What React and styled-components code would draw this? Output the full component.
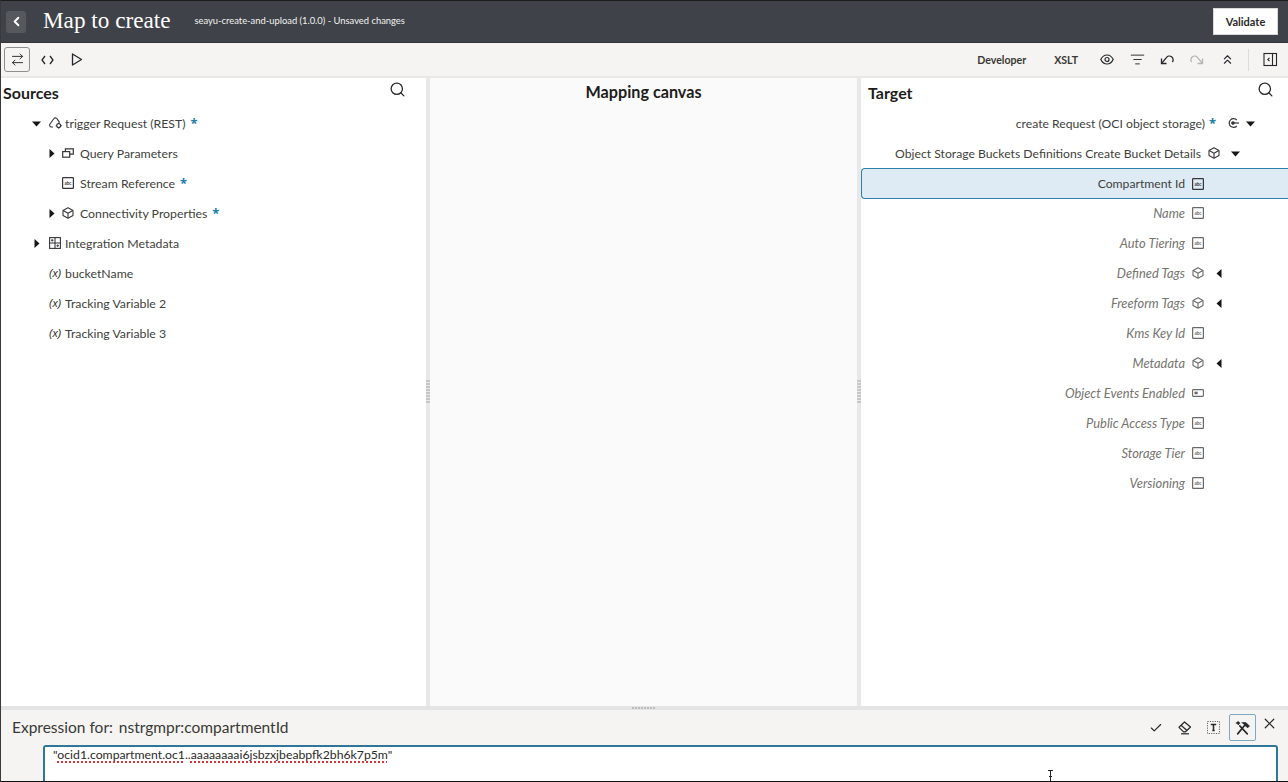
import React from "react";
import styled, { createGlobalStyle } from "styled-components";
import { ArrowRightLeft, ChevronLeft, ChevronsUp, Search, X, Check, ListFilter } from "lucide-react";

const GlobalStyle = createGlobalStyle`
  html, body { margin: 0; padding: 0; height: 100%; overflow: hidden; }
  body { font-family: Lato, "Noto Sans", "Liberation Sans", sans-serif; color: #2b2a28; background: #fff; }
`;

const Page = styled.div`
  position: relative;
  width: 1288px;
  height: 782px;
  box-sizing: border-box;
  border-top: 1px solid #1c1c1c;
  border-left: 1px solid #3a3a3a;
  border-bottom: 1px solid #111;
  display: flex;
  flex-direction: column;
  overflow: hidden;
`;

const Header = styled.header`
  height: 41px;
  flex: none;
  background: #3f4248;
  border-bottom: 1px solid #33353a;
  display: flex;
  align-items: center;
  padding: 0 10px 0 5px;
  color: #fff;
`;
const BackButton = styled.div`
  width: 20px;
  height: 22px;
  border-radius: 3px;
  background: #55585d;
  display: flex;
  align-items: center;
  justify-content: center;
  margin-right: 17px;
`;
const Title = styled.h1`
  font-family: "Liberation Serif", serif;
  font-weight: 400;
  font-size: 23.2px;
  margin: 0 24px 2px 0;
  white-space: nowrap;
`;
const Subtitle = styled.span`
  font-size: 9.4px;
  color: #f2f2f2;
  white-space: nowrap;
  margin-bottom: 2px;
`;
const ValidateButton = styled.button`
  margin-left: auto;
  width: 65px;
  height: 27px;
  border: 1px solid #d8d8d8;
  background: #fff;
  color: #2b2a28;
  font: 700 11px Lato, sans-serif;
  padding: 0;
`;

const Toolbar = styled.div`
  height: 33px;
  flex: none;
  background: #f5f4f2;
  border-bottom: 2px solid #e9e8e6;
  display: flex;
  align-items: center;
  padding: 0 3px;
`;
const ToolButton = styled.div`
  width: ${({ $w }) => $w || 30}px;
  height: ${({ $active }) => ($active ? 25 : 26)}px;
  flex: none;
  display: flex;
  align-items: center;
  justify-content: center;
  box-sizing: border-box;
  color: ${({ $off }) => ($off ? "#b4b4b2" : "#26272a")};
  ${({ $active }) => $active && "border: 1px solid #8e8e8e; border-radius: 3px; width: 26px; margin-right: 2px;"}
`;
const ToolText = styled.span`
  font-size: 10.6px;
  font-weight: 700;
  color: #3a3936;
  margin-right: ${({ $mr }) => $mr}px;
`;
const Spacer = styled.div`
  flex: 1;
`;
const ToolDivider = styled.div`
  width: 1px;
  height: 22px;
  background: #dedddb;
  margin: 0 6px;
`;

const Panels = styled.div`
  flex: 1;
  min-height: 0;
  display: grid;
  grid-template-columns: 425px 4px 427px 4px 1fr;
`;
const Gutter = styled.div`
  position: relative;
  background: #e8e8e8;
`;
const GutterGrip = styled.div`
  position: absolute;
  left: 0;
  right: 0;
  top: 302px;
  height: 24px;
  background: repeating-linear-gradient(to bottom, #c6c6c6 0 2px, transparent 2px 3px);
`;
const SidePanel = styled.section`
  position: relative;
  background: #fff;
  min-width: 0;
`;
const CanvasPanel = styled.section`
  background: #fafafa;
  min-width: 0;
`;
const PanelTitle = styled.h2`
  margin: 0;
  font-size: ${({ $center }) => ($center ? 16.2 : 16)}px;
  font-weight: 700;
  color: #1e1d1b;
  height: 30px;
  line-height: ${({ $center }) => ($center ? 28 : 30)}px;
  padding-left: ${({ $pl }) => $pl || 2}px;
  padding-right: ${({ $center }) => ($center ? 2 : 0)}px;
  text-align: ${({ $center }) => ($center ? "center" : "left")};
`;
const PanelSearch = styled.div`
  position: absolute;
  right: ${({ $right }) => $right}px;
  top: 3px;
  color: #26272a;
  display: flex;
`;

const SourceRow = styled.div`
  height: 30px;
  display: flex;
  align-items: center;
  padding-left: ${({ $indent }) => $indent}px;
  font-size: 12.3px;
  color: #403f3c;
  white-space: nowrap;
`;
const CaretSlot = styled.span`
  width: 17px;
  flex: none;
  display: flex;
  align-items: center;
`;
const IconSlot = styled.span`
  width: 16px;
  flex: none;
  display: flex;
  align-items: center;
  color: #35353a;
  ${({ $nested }) => $nested && "margin: 0 2px 0 -2px;"}
`;
const Star = styled.span`
  font-family: "Noto Sans", sans-serif;
  color: #1a7fa8;
  font-weight: 700;
  font-size: 13px;
  margin-left: ${({ $ml }) => $ml || 5}px;
`;
const VarMark = styled.span`
  font-family: "Liberation Sans", sans-serif;
  font-style: italic;
  font-size: 10.5px;
  color: #2b2a28;
  width: 16px;
  flex: none;
`;

const TargetRow = styled.div`
  height: 30px;
  box-sizing: border-box;
  display: flex;
  align-items: center;
  justify-content: flex-end;
  padding-right: ${({ $pr }) => $pr}px;
  font-size: ${({ $optional }) => ($optional ? 12.9 : 12.2)}px;
  white-space: nowrap;
  font-style: ${({ $optional }) => ($optional ? "italic" : "normal")};
  color: ${({ $optional }) => ($optional ? "#75746f" : "#403f3c")};
  ${({ $selected }) =>
    $selected &&
    "height: 31px; margin-bottom: -1px; background: #deebf4; border: 1px solid #2f80a8; border-right: 0; border-radius: 4px 0 0 4px;"}
`;
const TargetIcon = styled.span`
  margin-left: ${({ $ml }) => $ml || 7}px;
  display: flex;
  flex: none;
  color: ${({ $dim }) => ($dim ? "#6a6a6a" : "#35353a")};
`;

const Splitter = styled.div`
  position: relative;
  height: 4px;
  flex: none;
  background: #e4e4e4;
`;
const SplitterGrip = styled.div`
  position: absolute;
  left: 631px;
  top: 1px;
  width: 24px;
  height: 2px;
  background: repeating-linear-gradient(to right, #bcbcbc 0 2px, transparent 2px 3px);
`;
const ExpressionPanel = styled.div`
  height: 71px;
  flex: none;
  background: #f5f4f2;
  display: flex;
  flex-direction: column;
`;
const ExpressionHead = styled.div`
  height: 35px;
  flex: none;
  display: flex;
  align-items: center;
  padding: 0 5px 0 11px;
`;
const ExpressionLabel = styled.span`
  font-size: 15.5px;
  color: #3a3936;
  white-space: pre;
  margin-bottom: 2px;
`;
const ExpressionTarget = styled.span`
  margin-left: -2px;
`;
const ExpressionTools = styled.div`
  margin-left: auto;
  display: flex;
  align-items: center;
  color: #26272a;
`;
const ExprButton = styled.div`
  width: ${({ $w }) => $w || 29}px;
  height: 27px;
  box-sizing: border-box;
  display: flex;
  align-items: center;
  justify-content: center;
  ${({ $active }) => $active && "width: 27px; margin-left: 1px; border: 1px solid #7fa9c2; border-radius: 2px;"}
`;
const CloseMark = styled.span`
  display: flex;
  margin-bottom: 8px;
`;
const Editor = styled.div`
  flex: 1;
  margin: 0 10px 0 42px;
  background: #fff;
  border: 2px solid #2f7698;
  border-bottom: 0;
  border-radius: 3px 3px 0 0;
  padding: 0 8px;
  font-size: 12.25px;
  line-height: 16px;
  color: #2b2a28;
`;
const Misspelled = styled.span`
  text-decoration: underline dotted #d9333f 1.5px;
  text-underline-offset: 2px;
`;
const TextCursor = styled.svg`
  position: absolute;
  left: 1045px;
  top: 769px;
`;

const Caret = ({ dir }) => {
  const points = {
    down: "0,2.5 9,2.5 4.5,7.5",
    right: "2.5,0 7.5,4.5 2.5,9",
    left: "6.5,0 1.5,4.5 6.5,9",
  }[dir];
  return (
    <svg width="9" height="9" viewBox="0 0 9 9">
      <polygon points={points} fill="#161616" />
    </svg>
  );
};

const TextTypeIcon = () => (
  <svg width="12" height="12" viewBox="0 0 12 12" fill="none">
    <rect x=".6" y=".6" width="10.8" height="10.8" rx=".6" stroke="currentColor" strokeWidth="1.2" />
    <text x="6" y="7.6" textAnchor="middle" fontSize="4.6" fontWeight="700" fontStyle="normal" fontFamily="Lato, sans-serif" fill="currentColor">abc</text>
  </svg>
);
const BoolTypeIcon = () => (
  <svg width="12" height="12" viewBox="0 0 12 12" fill="none">
    <rect x=".6" y="2.6" width="10.8" height="6.8" rx=".6" stroke="currentColor" strokeWidth="1.1" />
    <rect x="2.5" y="4.7" width="3.2" height="2.5" fill="currentColor" />
  </svg>
);
const CubeIcon = () => (
  <svg width="12" height="12" viewBox="0 0 12 12" fill="none" stroke="currentColor" strokeWidth="1.1" strokeLinejoin="round">
    <path d="M6 .8 11 3.4v5.2L6 11.2 1 8.6V3.4Z" />
    <path d="M1.2 3.6 6 6.2l4.8-2.6M6 6.2v4.8" />
  </svg>
);
const RestIcon = () => (
  <svg width="14" height="13" viewBox="0 0 14 13" fill="none" stroke="currentColor" strokeWidth="1.1">
    <path d="M3.5 10H2.4A1.9 1.9 0 0 1 1 7l3.8-5.2a2 2 0 0 1 3.6.6l2 2.7" strokeLinecap="round" />
    <circle cx="9.7" cy="8.6" r="2" />
    <path d="M9.7 5.6v1M9.7 10.6v1M6.8 8.6h1M11.7 8.6h1" />
  </svg>
);
const ParamsIcon = () => (
  <svg width="12" height="12" viewBox="0 0 12 12" fill="none" stroke="currentColor" strokeWidth="1.2">
    <rect x=".7" y="4.6" width="7" height="5.6" />
    <path d="M3.4 4.4V1.8h7.9v5.4H7.9" />
  </svg>
);
const MetaIcon = () => (
  <svg width="12" height="12" viewBox="0 0 12 12" fill="none" stroke="currentColor" strokeWidth="1.1">
    <rect x=".6" y=".6" width="10.8" height="10.8" />
    <path d="M6 .6v10.8M.6 6h10.8" />
    <path d="M2 3.3h2.5M3.2 2v2.6M7.4 8.7h2.6M8.7 7.4V10" strokeWidth=".9" />
  </svg>
);
const RequestIcon = () => (
  <svg width="12" height="12" viewBox="0 0 12 12" fill="none" stroke="currentColor" strokeWidth="1.2">
    <path d="M9.8 3A4.4 4.4 0 1 0 9.8 9" />
    <circle cx="6" cy="6" r="1.2" fill="currentColor" />
    <path d="M7 6h5" />
  </svg>
);
const CodeIcon = () => (
  <svg width="13" height="10" viewBox="0 0 13 10" fill="none" stroke="currentColor" strokeWidth="1.3">
    <path d="M4 1 1 5l3 4M9 1l3 4-3 4" />
  </svg>
);
const PlayIcon = () => (
  <svg width="12" height="13" viewBox="0 0 12 13" fill="none" stroke="currentColor" strokeWidth="1.3" strokeLinejoin="round">
    <path d="M1.5 1 10.5 6.5 1.5 12Z" />
  </svg>
);
const EyeIcon = () => (
  <svg width="14" height="11" viewBox="0 0 14 11" fill="none" stroke="currentColor" strokeWidth="1.2">
    <path d="M.8 5.5C2.2 2.6 4.4 1 7 1s4.8 1.6 6.2 4.5C11.8 8.4 9.6 10 7 10S2.2 8.4.8 5.5Z" />
    <circle cx="7" cy="5.5" r="2" />
  </svg>
);
const UndoIcon = ({ flip }) => (
  <svg width="14" height="11" viewBox="0 0 14 11" fill="none" stroke="currentColor" strokeWidth="1.3" style={flip ? { transform: "scaleX(-1)" } : undefined}>
    <path d="M1.5 4.5v5h5" />
    <path d="M1.8 9.2 6.4 3.6A3.4 3.4 0 0 1 12.4 8" />
  </svg>
);
const CollapseIcon = () => (
  <svg width="15" height="15" viewBox="0 0 15 15" fill="none" stroke="currentColor" strokeWidth="1.1">
    <rect x="1" y="1.5" width="12.5" height="12" />
    <path d="M9.5 1.5v12" />
    <path d="M6.5 5.8 4.8 7.5l1.7 1.7" />
  </svg>
);
const EraserIcon = () => (
  <svg width="14" height="14" viewBox="0 0 14 14" fill="none" stroke="currentColor" strokeWidth="1.2" strokeLinejoin="round">
    <path d="M1 6.3 6.5 1 12.5 6 7.5 10.8 5.5 10.8Z" />
    <path d="M3 4.3 9 9.5" />
    <path d="M3 12.8h8" />
  </svg>
);
const TextBoxIcon = () => (
  <svg width="13" height="13" viewBox="0 0 13 13" fill="none">
    <rect x=".5" y=".5" width="12" height="12" stroke="currentColor" strokeDasharray="1.2 1.2" opacity=".7" />
    <path d="M3.8 3.5h5.4M6.5 3.5v6M5.3 9.5h2.4" stroke="currentColor" strokeWidth="1.5" />
  </svg>
);
const ToolsIcon = () => (
  <svg width="16" height="16" viewBox="0 0 15 15" fill="none" stroke="currentColor" strokeLinecap="round">
    <path d="M9.5 4.5 2.5 13" strokeWidth="1.5" />
    <path d="M6.5 2.5h3.8l3.2 3.2-1.5 1.5-3-2.2" fill="currentColor" strokeWidth=".8" />
    <path d="M4.5 5.5 11.5 13" strokeWidth="1.5" />
    <path d="M1.5 2.8 3 4.4l1.5-1.3L3.2 1.5a2.4 2.4 0 0 0-1.7 1.3Z" fill="currentColor" strokeWidth=".8" />
  </svg>
);

const sources = [
  { indent: 31, caret: "down", icon: <RestIcon />, label: "trigger Request (REST)", required: true },
  { indent: 46, caret: "right", icon: <ParamsIcon />, label: "Query Parameters", nested: true },
  { indent: 46, icon: <TextTypeIcon />, label: "Stream Reference", required: true, nested: true },
  { indent: 46, caret: "right", icon: <CubeIcon />, label: "Connectivity Properties", required: true, nested: true },
  { indent: 31, caret: "right", icon: <MetaIcon />, label: "Integration Metadata" },
  { indent: 31, variable: true, label: "bucketName" },
  { indent: 31, variable: true, label: "Tracking Variable 2" },
  { indent: 31, variable: true, label: "Tracking Variable 3" },
];

const targets = [
  { label: "Name", Icon: TextTypeIcon },
  { label: "Auto Tiering", Icon: TextTypeIcon },
  { label: "Defined Tags", Icon: CubeIcon, caret: true },
  { label: "Freeform Tags", Icon: CubeIcon, caret: true },
  { label: "Kms Key Id", Icon: TextTypeIcon },
  { label: "Metadata", Icon: CubeIcon, caret: true },
  { label: "Object Events Enabled", Icon: BoolTypeIcon },
  { label: "Public Access Type", Icon: TextTypeIcon },
  { label: "Storage Tier", Icon: TextTypeIcon },
  { label: "Versioning", Icon: TextTypeIcon },
];

const App = () => {
  return (
    <Page>
      <GlobalStyle />
      <Header>
        <BackButton>
          <ChevronLeft size={15} strokeWidth={3} color="#fff" />
        </BackButton>
        <Title>Map to create</Title>
        <Subtitle>seayu-create-and-upload (1.0.0) - Unsaved changes</Subtitle>
        <ValidateButton>Validate</ValidateButton>
      </Header>

      <Toolbar>
        <ToolButton $active>
          <ArrowRightLeft size={15} strokeWidth={1.5} />
        </ToolButton>
        <ToolButton><CodeIcon /></ToolButton>
        <ToolButton><PlayIcon /></ToolButton>
        <Spacer />
        <ToolText $mr={28}>Developer</ToolText>
        <ToolText $mr={14}>XSLT</ToolText>
        <ToolButton><EyeIcon /></ToolButton>
        <ToolButton><ListFilter size={15} strokeWidth={1.5} /></ToolButton>
        <ToolButton><UndoIcon /></ToolButton>
        <ToolButton $off><UndoIcon flip /></ToolButton>
        <ToolButton><ChevronsUp size={15} strokeWidth={1.8} /></ToolButton>
        <ToolDivider />
        <ToolButton><CollapseIcon /></ToolButton>
      </Toolbar>

      <Panels>
        <SidePanel>
          <PanelTitle>Sources</PanelTitle>
          <PanelSearch $right={20}><Search size={17} strokeWidth={1.8} /></PanelSearch>
          {sources.map((row) => (
            <SourceRow key={row.label} $indent={row.indent}>
              <CaretSlot>{row.caret && <Caret dir={row.caret} />}</CaretSlot>
              {row.variable ? (
                <VarMark>(x)</VarMark>
              ) : (
                <IconSlot $nested={row.nested}>{row.icon}</IconSlot>
              )}
              {row.label}
              {row.required && <Star>*</Star>}
            </SourceRow>
          ))}
        </SidePanel>
        <Gutter><GutterGrip /></Gutter>
        <CanvasPanel>
          <PanelTitle $center>Mapping canvas</PanelTitle>
        </CanvasPanel>
        <Gutter><GutterGrip /></Gutter>
        <SidePanel>
          <PanelTitle $pl={7}>Target</PanelTitle>
          <PanelSearch $right={14}><Search size={17} strokeWidth={1.8} /></PanelSearch>
          <TargetRow $pr={33}>
            create Request (OCI object storage)
            <Star $ml={4}>*</Star>
            <TargetIcon $ml={11}><RequestIcon /></TargetIcon>
            <TargetIcon $ml={7}><Caret dir="down" /></TargetIcon>
          </TargetRow>
          <TargetRow $pr={48}>
            Object Storage Buckets Definitions Create Bucket Details
            <TargetIcon><CubeIcon /></TargetIcon>
            <TargetIcon $ml={11}><Caret dir="down" /></TargetIcon>
          </TargetRow>
          <TargetRow $selected $pr={84}>
            Compartment Id
            <TargetIcon><TextTypeIcon /></TargetIcon>
          </TargetRow>
          {targets.map(({ label, Icon, caret }) => (
            <TargetRow key={label} $optional $pr={caret ? 64 : 84}>
              {label}
              <TargetIcon $dim><Icon /></TargetIcon>
              {caret && <TargetIcon $ml={11}><Caret dir="left" /></TargetIcon>}
            </TargetRow>
          ))}
        </SidePanel>
      </Panels>

      <Splitter><SplitterGrip /></Splitter>
      <ExpressionPanel>
        <ExpressionHead>
          <ExpressionLabel>Expression for:  <ExpressionTarget>nstrgmpr:compartmentId</ExpressionTarget></ExpressionLabel>
          <ExpressionTools>
            <ExprButton><Check size={14} strokeWidth={2} /></ExprButton>
            <ExprButton><EraserIcon /></ExprButton>
            <ExprButton><TextBoxIcon /></ExprButton>
            <ExprButton $active><ToolsIcon /></ExprButton>
            <ExprButton $w={27}><CloseMark><X size={17} strokeWidth={1.7} /></CloseMark></ExprButton>
          </ExpressionTools>
        </ExpressionHead>
        <Editor>
          "<Misspelled>ocid1.compartment.oc1</Misspelled>..<Misspelled>aaaaaaaai6jsbzxjbeabpfk2bh6k7p5m</Misspelled>"
        </Editor>
      </ExpressionPanel>
      <TextCursor width="9" height="13" viewBox="0 0 9 13" fill="none" stroke="#222" strokeWidth="1">
        <path d="M2 .5h5M4.5.5v12M2 12.5h5M3 6.5h3" />
      </TextCursor>
    </Page>
  );
};

export default App;
